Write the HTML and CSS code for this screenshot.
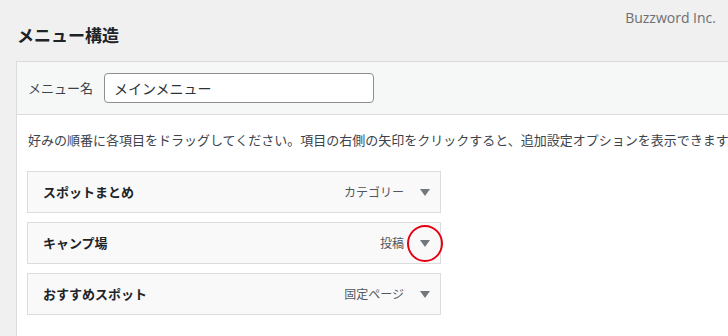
FILE: index.html
```html
<!DOCTYPE html>
<html lang="ja">
<head>
<meta charset="utf-8">
<link rel="stylesheet" href="styles.css">
</head>
<body>
<div class="page">
  <div class="brand">Buzzword Inc.</div>
  <h2 class="title">メニュー構造</h2>
  <div class="panel">
    <div class="panel-head">
      <label class="name-label">メニュー名</label>
      <div class="name-input">メインメニュー</div>
    </div>
    <div class="panel-body">
      <p class="desc">好みの順番に各項目をドラッグしてください。項目の右側の矢印をクリックすると、追加設定オプションを表示できます。</p>
      <ul class="items">
        <li class="item">
          <span class="item-title">スポットまとめ</span>
          <span class="item-type">カテゴリー</span>
          <span class="item-toggle"><span class="arrow"></span></span>
        </li>
        <li class="item">
          <span class="item-title">キャンプ場</span>
          <span class="item-type">投稿</span>
          <span class="item-toggle"><span class="arrow"></span><span class="ring"></span></span>
        </li>
        <li class="item">
          <span class="item-title">おすすめスポット</span>
          <span class="item-type">固定ページ</span>
          <span class="item-toggle"><span class="arrow"></span></span>
        </li>
      </ul>
    </div>
  </div>
</div>
</body>
</html>
```
FILE: styles.css
```css
html, body {
  margin: 0;
  padding: 0;
  background: #f0f0f1;
  overflow: hidden;
}
body {
  width: 728px;
  height: 336px;
  font-family: "Noto Sans CJK JP", "Noto Sans", sans-serif;
  color: #1d2327;
}
.page {
  position: relative;
  padding-left: 16px;
}
.brand {
  position: absolute;
  top: 9px;
  right: 12px;
  font-family: "Open Sans", "Noto Sans", sans-serif;
  font-size: 14px;
  line-height: 18px;
  color: #6e6e6e;
}
.title {
  margin: 0;
  padding: 23px 0 14px 1px;
  font-size: 17px;
  line-height: 24px;
  font-weight: 700;
  color: #1d2327;
}
.panel {
  border-top: 1px solid #dcdcde;
  border-left: 1px solid #dcdcde;
  background: #fff;
  height: 274px;
}
.panel-head {
  display: flex;
  align-items: center;
  gap: 11px;
  height: 52px;
  padding-left: 11px;
  background: #f6f7f7;
  border-bottom: 1px solid #dcdcde;
}
.name-label {
  font-size: 13px;
  line-height: 20px;
  color: #3c434a;
}
.name-input {
  box-sizing: border-box;
  width: 270px;
  height: 30px;
  border: 1px solid #8c8f94;
  border-radius: 4px;
  background: #fff;
  padding: 0 9px;
  font-size: 14px;
  line-height: 28px;
  color: #2c3338;
}
.panel-body {
  padding: 15px 0 0 10px;
}
.desc {
  margin: 0 0 21px 1px;
  font-size: 13px;
  line-height: 20px;
  color: #3c434a;
  white-space: nowrap;
}
.items {
  list-style: none;
  margin: 0;
  padding: 0;
  display: flex;
  flex-direction: column;
  gap: 9px;
}
.item {
  box-sizing: border-box;
  width: 414px;
  height: 42px;
  display: flex;
  align-items: center;
  border: 1px solid #dcdcde;
  background: #f9f9f9;
  padding-left: 15px;
}
.item-title {
  flex: 1;
  font-size: 13px;
  font-weight: 700;
  line-height: 20px;
  color: #1d2327;
}
.item-type {
  font-size: 12px;
  line-height: 20px;
  color: #50575e;
  margin-right: 6px;
}
.item-toggle {
  position: relative;
  width: 30px;
  height: 40px;
  display: flex;
  align-items: center;
  justify-content: center;
}
.arrow {
  width: 0;
  height: 0;
  border-left: 5px solid transparent;
  border-right: 5px solid transparent;
  border-top: 7px solid #72777c;
  margin-top: 1px;
}
.ring {
  position: absolute;
  left: 50%;
  top: 50%;
  width: 32px;
  height: 33px;
  margin-left: -18px;
  margin-top: -18px;
  border: 2px solid #e60012;
  border-radius: 50%;
}
```
